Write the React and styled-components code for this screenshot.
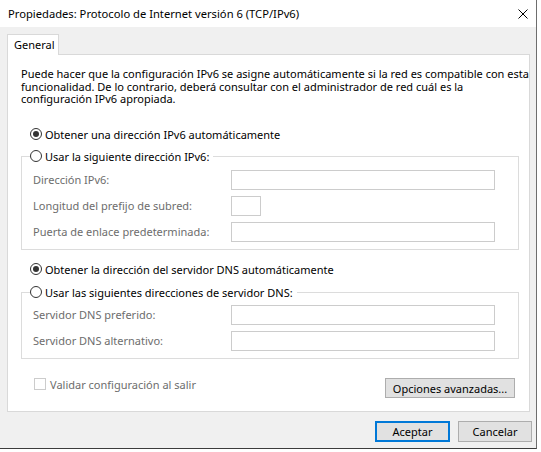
import React from "react";
import styled, { createGlobalStyle } from "styled-components";

const GlobalStyle = createGlobalStyle`
    body {
        margin: 0;
        background: #ffffff;
        font-family: "Noto Sans", "Liberation Sans", sans-serif;
        font-size: 11px;
        color: #000000;
    }
`;

const Window = styled.div`
    width: 537px;
    height: 449px;
    box-sizing: border-box;
    background: #f0f0f0;
    border-right: 1px solid #6e6e6e;
    border-bottom: 1px solid #3c3c3c;
    display: flex;
    flex-direction: column;
`;

const TitleBar = styled.div`
    height: 27px;
    background: #ffffff;
    display: flex;
    align-items: center;
    padding-left: 8px;
    padding-bottom: 1px;
    box-sizing: border-box;
    font-size: 11.2px;
`;

const Title = styled.div`
    flex: 1;
    white-space: nowrap;
`;

const CloseIcon = styled.svg`
    width: 10px;
    height: 10px;
    margin-right: 8px;
    margin-top: 2px;
`;

const Body = styled.div`
    padding: 7px 6px 0 7px;
`;

const Tab = styled.div`
    position: relative;
    z-index: 1;
    width: 52px;
    height: 21px;
    box-sizing: border-box;
    margin-bottom: -1px;
    border: 1px solid #d9d9d9;
    border-bottom: none;
    background: #ffffff;
    padding-left: 6px;
    line-height: 20px;
`;

const Panel = styled.div`
    height: 358px;
    box-sizing: border-box;
    border: 1px solid #d9d9d9;
    background: #ffffff;
    padding: 13px 10px 0 13px;
`;

const Intro = styled.p`
    margin: 0;
    line-height: 12.5px;
    white-space: nowrap;
`;

const RadioRow = styled.label`
    display: flex;
    align-items: center;
    gap: 3px;
    height: 16px;
    padding-left: 9px;
    margin-top: ${(p) => p.$top || 0}px;
    white-space: nowrap;
`;

const RadioMark = styled.span`
    width: 12px;
    height: 12px;
    box-sizing: border-box;
    border: 1px solid #333333;
    border-radius: 50%;
    display: flex;
    align-items: center;
    justify-content: center;
    &::after {
        content: "";
        width: 6px;
        height: 6px;
        border-radius: 50%;
        background: ${(p) => (p.$checked ? "#333333" : "transparent")};
    }
`;

const Group = styled.fieldset`
    margin: ${(p) => p.$top || 0}px 0 0 0;
    padding: ${(p) => p.$padTop || 6}px 23px 7px 11px;
    border: 1px solid #dcdcdc;
    min-width: 0;
`;

const Legend = styled.legend`
    padding: 0 4px 0 0;
    margin-left: -3px;
`;

const LegendRadio = styled.label`
    display: flex;
    align-items: center;
    gap: 3px;
    height: 16px;
    white-space: nowrap;
`;

const FieldRows = styled.div`
    display: grid;
    grid-template-columns: 198px 1fr;
    row-gap: 6px;
`;

const FieldLabel = styled.span`
    color: #6d6d6d;
    line-height: 20px;
    white-space: nowrap;
`;

const TextBox = styled.div`
    width: ${(p) => p.$w || 264}px;
    height: 20px;
    box-sizing: border-box;
    border: 1px solid #cccccc;
    background: #ffffff;
`;

const FooterRow = styled.div`
    display: flex;
    justify-content: space-between;
    align-items: flex-start;
    margin-top: 19px;
    padding-left: 13px;
    padding-right: 4px;
`;

const CheckRow = styled.label`
    display: flex;
    align-items: center;
    gap: 4px;
    height: 12px;
    color: #6d6d6d;
    white-space: nowrap;
`;

const CheckBox = styled.span`
    width: 12px;
    height: 12px;
    box-sizing: border-box;
    border: 1px solid #cccccc;
    background: #ffffff;
`;

const Button = styled.button`
    font-family: inherit;
    font-size: 11px;
    color: #000000;
    width: ${(p) => p.$w || 75}px;
    height: ${(p) => p.$h || 21}px;
    box-sizing: border-box;
    padding: 0;
    background: #e1e1e1;
    border: ${(p) => (p.$default ? "2px solid #0078d7" : "1px solid #adadad")};
    border-radius: 0;
`;

const DialogButtons = styled.div`
    display: flex;
    justify-content: flex-end;
    gap: 8px;
    margin-top: 9px;
    margin-right: -2px;
`;

const Under = styled.div`
    height: 2px;
    overflow: hidden;
    font-size: 11px;
    white-space: nowrap;
    line-height: 12px;
    color: #1a1a1a;
`;

const UnderText = styled.div`
    margin-top: -10px;
    display: flex;
    gap: 26px;
`;

function Radio({ checked, children }) {
    return (
        <>
            <RadioMark $checked={checked} />
            <span>{children}</span>
        </>
    );
}

export default function App() {
    return (
        <>
            <GlobalStyle />
            <Window>
                <TitleBar>
                    <Title>Propiedades: Protocolo de Internet versión 6 (TCP/IPv6)</Title>
                    <CloseIcon viewBox="0 0 10 10">
                        <path d="M0.5 0.5 L9.5 9.5 M9.5 0.5 L0.5 9.5" stroke="#000" strokeWidth="1" />
                    </CloseIcon>
                </TitleBar>
                <Body>
                    <Tab>General</Tab>
                    <Panel>
                        <Intro>
                            Puede hacer que la configuración IPv6 se asigne automáticamente si la red es compatible con esta
                            <br />
                            funcionalidad. De lo contrario, deberá consultar con el administrador de red cuál es la
                            <br />
                            configuración IPv6 apropiada.
                        </Intro>

                        <RadioRow $top={20.5}>
                            <Radio checked>Obtener una dirección IPv6 automáticamente</Radio>
                        </RadioRow>
                        <Group $top={6}>
                            <Legend>
                                <LegendRadio>
                                    <Radio>Usar la siguiente dirección IPv6:</Radio>
                                </LegendRadio>
                            </Legend>
                            <FieldRows>
                                <FieldLabel>Dirección IPv6:</FieldLabel>
                                <TextBox />
                                <FieldLabel>Longitud del prefijo de subred:</FieldLabel>
                                <TextBox $w={30} />
                                <FieldLabel>Puerta de enlace predeterminada:</FieldLabel>
                                <TextBox />
                            </FieldRows>
                        </Group>

                        <RadioRow $top={11}>
                            <Radio checked>Obtener la dirección del servidor DNS automáticamente</Radio>
                        </RadioRow>
                        <Group $top={7} $padTop={5}>
                            <Legend>
                                <LegendRadio>
                                    <Radio>Usar las siguientes direcciones de servidor DNS:</Radio>
                                </LegendRadio>
                            </Legend>
                            <FieldRows>
                                <FieldLabel>Servidor DNS preferido:</FieldLabel>
                                <TextBox />
                                <FieldLabel>Servidor DNS alternativo:</FieldLabel>
                                <TextBox />
                            </FieldRows>
                        </Group>

                        <FooterRow>
                            <CheckRow>
                                <CheckBox />
                                <span>Validar configuración al salir</span>
                            </CheckRow>
                            <Button $w={130} $h={20}>Opciones avanzadas...</Button>
                        </FooterRow>
                    </Panel>
                    <DialogButtons>
                        <Button $default>Aceptar</Button>
                        <Button $w={74}>Cancelar</Button>
                    </DialogButtons>
                </Body>
            </Window>
            <Under>
                <UnderText>
                    <span>ele</span>
                    <span>1 elemento seleccionado</span>
                </UnderText>
            </Under>
        </>
    );
}
